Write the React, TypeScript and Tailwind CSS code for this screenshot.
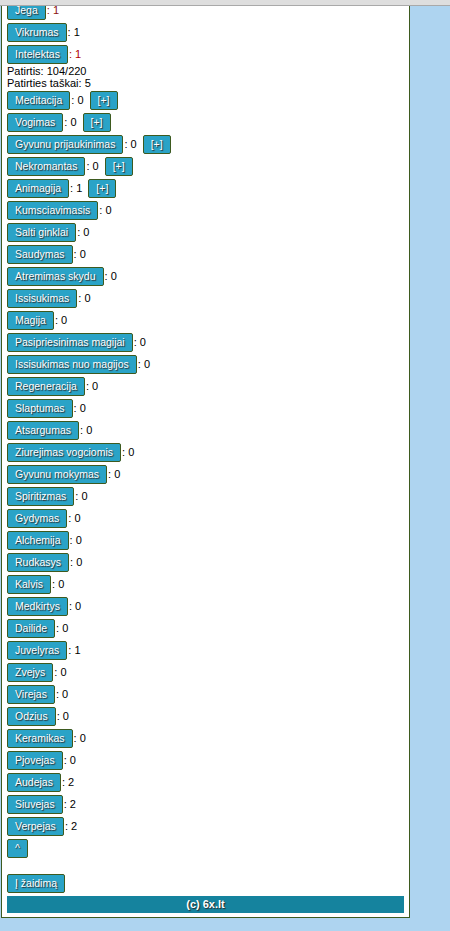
import type { ReactNode } from "react";

type Skill = { name: string; value: number; plus?: boolean };

const skills: Skill[] = [
  { name: "Meditacija", value: 0, plus: true },
  { name: "Vogimas", value: 0, plus: true },
  { name: "Gyvunu prijaukinimas", value: 0, plus: true },
  { name: "Nekromantas", value: 0, plus: true },
  { name: "Animagija", value: 1, plus: true },
  { name: "Kumsciavimasis", value: 0 },
  { name: "Salti ginklai", value: 0 },
  { name: "Saudymas", value: 0 },
  { name: "Atremimas skydu", value: 0 },
  { name: "Issisukimas", value: 0 },
  { name: "Magija", value: 0 },
  { name: "Pasipriesinimas magijai", value: 0 },
  { name: "Issisukimas nuo magijos", value: 0 },
  { name: "Regeneracija", value: 0 },
  { name: "Slaptumas", value: 0 },
  { name: "Atsargumas", value: 0 },
  { name: "Ziurejimas vogciomis", value: 0 },
  { name: "Gyvunu mokymas", value: 0 },
  { name: "Spiritizmas", value: 0 },
  { name: "Gydymas", value: 0 },
  { name: "Alchemija", value: 0 },
  { name: "Rudkasys", value: 0 },
  { name: "Kalvis", value: 0 },
  { name: "Medkirtys", value: 0 },
  { name: "Dailide", value: 0 },
  { name: "Juvelyras", value: 1 },
  { name: "Zvejys", value: 0 },
  { name: "Virejas", value: 0 },
  { name: "Odzius", value: 0 },
  { name: "Keramikas", value: 0 },
  { name: "Pjovejas", value: 0 },
  { name: "Audejas", value: 2 },
  { name: "Siuvejas", value: 2 },
  { name: "Verpejas", value: 2 },
];

function GameButton({ children, className = "" }: { children: ReactNode; className?: string }) {
  return (
    <button
      className={`rounded-[2px] border border-[#3d5a1f] bg-[#2aa3c7] px-[7px] py-[2px] text-[10.5px] leading-[13px] text-white [text-shadow:1px_1px_1px_#2b2b2b] ${className}`}
    >
      {children}
    </button>
  );
}

function StatRow({ name, value, valueClass = "text-black", plus }: { name: string; value: number; valueClass?: string; plus?: boolean }) {
  return (
    <div className="mb-[3px] flex items-center">
      <GameButton>{name}</GameButton>
      <span className={`ml-[1px] text-[11px] ${valueClass}`}>: {value}</span>
      {plus && <GameButton className="ml-[6px]">[+]</GameButton>}
    </div>
  );
}

export default function App() {
  return (
    <div className="min-h-[931px] bg-[#aed4f0] font-['Liberation_Sans',Arial,sans-serif]">
      {/* toolbar strip pinned over the scrolled page */}
      <div className="fixed inset-x-0 top-0 z-10 h-[6px] border-b border-[#a9a9a9] bg-[#dedede]" />

      <div className="ml-px w-[409px] border-x border-b border-[#3d5a1f] bg-white px-[5px] pb-[4px] pt-px">
        <StatRow name="Jega" value={1} valueClass="text-[#8a1010]" />
        <StatRow name="Vikrumas" value={1} />
        <StatRow name="Intelektas" value={1} valueClass="text-[#b00000]" />

        <div className="mt-[-2px] mb-[2px] text-[11px] leading-[12px] text-black">
          <div>Patirtis: 104/220</div>
          <div>Patirties taškai: 5</div>
        </div>

        {skills.map((s) => (
          <StatRow key={s.name} name={s.name} value={s.value} plus={s.plus} />
        ))}

        <div className="mb-[16px] flex">
          <GameButton>^</GameButton>
        </div>

        <div className="mb-[3px] flex">
          <GameButton>Į žaidimą</GameButton>
        </div>

        <div className="h-[17px] bg-[#15839e] text-center text-[11px] font-bold leading-[17px] text-white [text-shadow:1px_1px_1px_#2b2b2b]">
          (c) 6x.lt
        </div>
      </div>
    </div>
  );
}
